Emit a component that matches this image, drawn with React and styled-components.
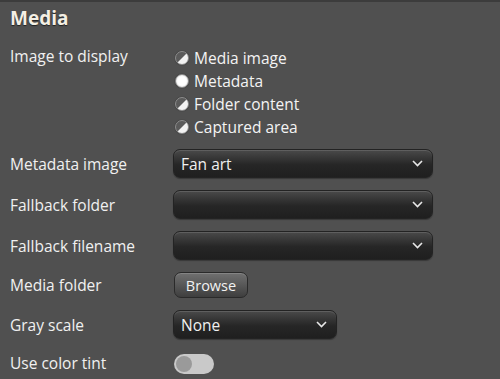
import React from "react";
import styled, { createGlobalStyle } from "styled-components";

const Global = createGlobalStyle`
  html, body { margin: 0; padding: 0; background: #505050; }
  body { font-family: "Open Sans", "Noto Sans", sans-serif; }
`;

const Panel = styled.div`
  width: 500px;
  height: 379px;
  box-sizing: border-box;
  background: #505050;
  border-top: 2px solid #3c3c3c;
  padding: 4px 10px 0 10px;
  color: #f2f2f2;
  overflow: hidden;
`;

const Title = styled.h1`
  margin: 0;
  font-size: 19px;
  font-weight: 700;
  line-height: 24px;
  color: #f4efe4;
  text-shadow: 0 1px 1px rgba(0, 0, 0, 0.6);
`;

const Form = styled.div`
  display: grid;
  grid-template-columns: 164px 1fr;
  row-gap: 12px;
  margin-top: 16px;
`;

const Label = styled.div`
  font-size: 15.5px;
  line-height: 20px;
  color: #f0f0f0;
  align-self: ${(p) => (p.$top ? "start" : "center")};
`;

const Cell = styled.div`
  display: flex;
  align-items: center;
  min-height: ${(p) => p.$h || 29}px;
  margin-top: ${(p) => p.$mt || 0}px;
`;

const RadioList = styled.div`
  display: flex;
  flex-direction: column;
  margin-left: 1px;
  margin-bottom: -1px;
`;

const RadioRow = styled.div`
  display: flex;
  align-items: center;
  gap: 5px;
  height: 23px;
  font-size: 15.5px;
  color: #f4f4f4;
`;

const RadioDot = styled.span`
  width: 14px;
  height: 14px;
  border-radius: 50%;
  box-sizing: border-box;
  border: 1.5px solid #8c8c8c;
  background: ${(p) =>
    p.$checked
      ? "radial-gradient(circle at 50% 50%, #ffffff 0 50%, #e4e4e4 75%, #bdbdbd 100%)"
      : "linear-gradient(135deg, #5a5a5a 0 47%, #f2f2f2 53% 100%)"};
  box-shadow: 0 0 1px rgba(0, 0, 0, 0.6);
  flex: none;
`;

const Select = styled.div`
  width: ${(p) => p.$w}px;
  height: 29px;
  box-sizing: border-box;
  border-radius: 7px;
  border: 1px solid #232323;
  background: linear-gradient(to bottom, #4a4a4a 0%, #363636 30%, #262626 55%, #1f1f1f 100%);
  box-shadow: inset 0 1px 0 rgba(255, 255, 255, 0.12), 0 1px 1px rgba(0, 0, 0, 0.3);
  display: flex;
  align-items: center;
  justify-content: space-between;
  padding: 0 9px 0 7px;
  margin-left: -1px;
  font-size: 15.5px;
  color: #f0f0f0;
`;

const Chevron = () => (
  <svg width="11" height="7" viewBox="0 0 11 7">
    <path d="M1 1 L5.5 5.5 L10 1" fill="none" stroke="#e8e8e8" strokeWidth="1.6" />
  </svg>
);

const Button = styled.button`
  width: 74px;
  height: 26px;
  border-radius: 7px;
  border: 1px solid #2a2a2a;
  background: linear-gradient(to bottom, #707070 0%, #5a5a5a 45%, #3e3e3e 100%);
  box-shadow: inset 0 1px 0 rgba(255, 255, 255, 0.15);
  color: #f2f2f2;
  font-family: inherit;
  font-size: 14.5px;
  padding: 0;
`;

const Toggle = styled.div`
  width: 40px;
  height: 20px;
  border-radius: 10px;
  background: #c9c9c9;
  display: flex;
  align-items: center;
  padding-left: 2px;
  box-sizing: border-box;
  &::before {
    content: "";
    width: 16px;
    height: 16px;
    border-radius: 50%;
    background: #9a9a9a;
  }
`;

const radios = [
  { label: "Media image" },
  { label: "Metadata", checked: true },
  { label: "Folder content" },
  { label: "Captured area" },
];

export default function App() {
  return (
    <>
      <Global />
      <Panel>
        <Title>Media</Title>
        <Form>
          <Label $top>Image to display</Label>
          <RadioList>
            {radios.map((r) => (
              <RadioRow key={r.label}>
                <RadioDot $checked={r.checked} />
                {r.label}
              </RadioRow>
            ))}
          </RadioList>

          <Label>Metadata image</Label>
          <Cell>
            <Select $w={260}>
              <span>Fan art</span>
              <Chevron />
            </Select>
          </Cell>

          <Label>Fallback folder</Label>
          <Cell>
            <Select $w={260}>
              <span />
              <Chevron />
            </Select>
          </Cell>

          <Label>Fallback filename</Label>
          <Cell>
            <Select $w={260}>
              <span />
              <Chevron />
            </Select>
          </Cell>

          <Label>Media folder</Label>
          <Cell $h={26}>
            <Button>Browse</Button>
          </Cell>

          <Label>Gray scale</Label>
          <Cell>
            <Select $w={164}>
              <span>None</span>
              <Chevron />
            </Select>
          </Cell>

          <Label>Use color tint</Label>
          <Cell $h={20} $mt={3}>
            <Toggle />
          </Cell>
        </Form>
      </Panel>
    </>
  );
}
